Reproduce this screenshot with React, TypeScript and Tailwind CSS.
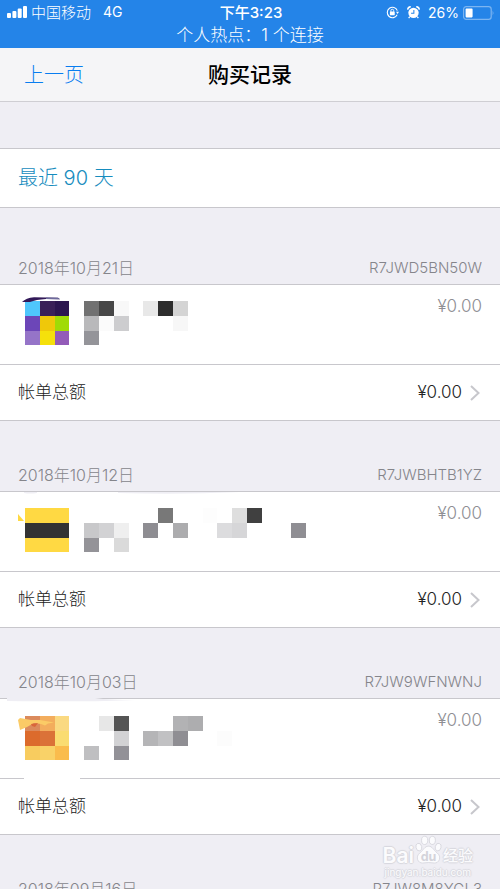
type Cell = [column: number, row: number, color: string];

type Purchase = {
  date: string;
  order: string;
  top: number;
  cells: Cell[];
  art?: "swoosh" | "corner" | "brush";
};

const purchases: Purchase[] = [
  {
    date: "2018年10月21日",
    order: "R7JWD5BN50W",
    top: 16,
    art: "swoosh",
    cells: [
      [0, 0, "#4fc6fc"], [1, 0, "#3a2058"], [2, 0, "#2c1650"],
      [0, 1, "#6c46b8"], [1, 1, "#efc80a"], [2, 1, "#a0db06"],
      [0, 2, "#9574c8"], [1, 2, "#f5e00b"], [2, 2, "#935bb8"],
      [4, 0, "#717171"], [5, 0, "#474747"], [6, 0, "#f8f8f8"],
      [8, 0, "#e8e8e8"], [9, 0, "#2d2d2d"], [10, 0, "#d4d4d4"],
      [4, 1, "#b9b9bb"], [5, 1, "#fbfbfb"], [6, 1, "#cdcdcf"],
      [10, 1, "#f7f7f7"], [4, 2, "#949499"],
    ],
  },
  {
    date: "2018年10月12日",
    order: "R7JWBHTB1YZ",
    top: 16,
    art: "corner",
    cells: [
      [0, 0, "#ffd943"], [1, 0, "#ffd943"], [2, 0, "#ffd943"],
      [0, 1, "#333333"], [1, 1, "#333333"], [2, 1, "#333333"],
      [0, 2, "#ffd943"], [1, 2, "#ffd943"], [2, 2, "#ffd943"],
      [9, 0, "#787878"], [12, 0, "#fdfdfd"], [14, 0, "#dedede"], [15, 0, "#404040"],
      [4, 1, "#c8c8ca"], [5, 1, "#d2d2d4"], [6, 1, "#efefef"],
      [8, 1, "#8e8d92"], [10, 1, "#acacae"], [13, 1, "#dcdcde"], [14, 1, "#d6d6d8"],
      [18, 1, "#8f8e93"], [4, 2, "#949398"], [6, 2, "#dadada"],
    ],
  },
  {
    date: "2018年10月03日",
    order: "R7JW9WFNWNJ",
    top: 17,
    art: "brush",
    cells: [
      [0, 0, "#db8a5c"], [1, 0, "#f3ad5d"], [2, 0, "#fad981"],
      [0, 1, "#dc6b2c"], [1, 1, "#db7238"], [2, 1, "#fadc71"],
      [0, 2, "#f8cc5f"], [1, 2, "#f9d268"], [2, 2, "#fabc4d"],
      [5, 0, "#e7e7e7"], [6, 0, "#545454"], [10, 0, "#b2b2b4"], [11, 0, "#adadaf"],
      [6, 1, "#d2d2d4"], [8, 1, "#b5b5b7"], [9, 1, "#c1c1c3"], [10, 1, "#8f8e93"],
      [13, 1, "#fcfcfc"], [4, 2, "#bfbfc1"], [6, 2, "#929197"],
    ],
  },
  { date: "2018年09月16日", order: "R7JW8M8YGL3", top: 16, cells: [] },
];

const PITCH = 14.8;

function Mosaic({ cells, top, art }: Pick<Purchase, "cells" | "top" | "art">) {
  return (
    <svg className="h-[79px] w-[320px] shrink-0 overflow-visible" viewBox="0 0 320 79" aria-hidden="true">
      <g shapeRendering="crispEdges">
        {cells.map(([column, row, color]) => (
          <rect
            key={`${column}-${row}`}
            x={25 + column * PITCH}
            y={top + row * PITCH}
            width={PITCH}
            height={PITCH}
            fill={color}
          />
        ))}
      </g>
      {art === "swoosh" && (
        <>
          <path d="M22 17 Q26 13 34 12.3 L58 12.8 L60 14.3 L46 14 Q36 14.5 30 17Z" fill="#321958" />
          <path d="M46 12.6 L58 12.8 L60 14.3 L46 14Z" fill="#6d6a9c" />
        </>
      )}
      {art === "corner" && (
        <>
          <path d="M18 22 L24 29 L18 29Z" fill="#ffd943" />
          <path d="M24 0 H37 V1 Q30 2 24 1Z M118 0 H240 Q180 3 118 1Z" fill="#efeef4" />
        </>
      )}
      {art === "brush" && (
        <>
          <path d="M7 -2 H95 V-1 Q110 1 135 1 Q100 3 7 2Z" fill="#efeef4" />
          <path d="M24 78 H80 V81 H24Z" fill="#ffffff" />
          <path d="M18 21 L20 19 L31 21 L40 21 L54 23.5 L48 24.5 L45 26.5 L41 25 L34 24 L27 28 L20 31Z" fill="#fbcb66" />
          <path d="M31 25 L38 24 L35 28 L32 27Z" fill="#d9663a" />
        </>
      )}
    </svg>
  );
}

function StatusBar() {
  return (
    <div className="h-12 shrink-0 bg-[#2484e8] text-white">
      <div className="grid h-[25px] grid-cols-[1fr_auto_1fr] items-center pl-[7px] pr-[5px] text-sm">
        <div className="flex items-center gap-1">
          <svg className="h-3 w-5" viewBox="0 0 20 12" fill="currentColor" aria-hidden="true">
            <rect x="0" y="7" width="4" height="5" rx="1" />
            <rect x="5.4" y="5" width="4" height="7" rx="1" />
            <rect x="10.7" y="2.5" width="4" height="9.5" rx="1" />
            <rect x="16" y="0" width="4" height="12" rx="1" />
          </svg>
          <span className="text-[15px] font-light">中国移动</span>
          <span className="ml-2">4G</span>
        </div>
        <span className="text-[15px] font-medium">下午3:23</span>
        <div className="flex items-center justify-end gap-2">
          <svg className="h-[13px] w-[13px]" viewBox="0 0 14 14" fill="none" stroke="currentColor" aria-hidden="true">
            <path d="M12.2 5 A5.6 5.6 0 1 0 12 9.5" strokeWidth="1.2" />
            <path d="M10.8 6.3 H14 L12.4 8.6Z" fill="currentColor" stroke="none" />
            <rect x="4.2" y="6" width="5.2" height="4" rx="0.5" fill="currentColor" stroke="none" />
            <path d="M5.3 6.3 V5 a1.5 1.5 0 0 1 3 0 V6.3" />
          </svg>
          <svg className="h-[13px] w-[13px]" viewBox="0 0 14 14" aria-hidden="true">
            <circle cx="7" cy="7.4" r="5.6" fill="#fff" />
            <path d="M1 4 A2.6 2.6 0 0 1 4 1 M10 1 A2.6 2.6 0 0 1 13 4" stroke="#fff" strokeWidth="1.8" fill="none" />
            <path d="M3 11.5 L1.8 13 M11 11.5 L12.2 13" stroke="#fff" strokeWidth="1.4" />
            <path d="M7.4 4.2 V7.8 H4.4" stroke="#2484e8" strokeWidth="1.1" fill="none" />
          </svg>
          <div className="flex items-center gap-1">
            <span>26%</span>
            <svg className="h-[14px] w-[32px]" viewBox="0 0 32 14" aria-hidden="true">
              <rect x="0.6" y="0.6" width="27.6" height="12.8" rx="2.6" fill="none" stroke="#7cb5f1" strokeWidth="1.2" />
              <rect x="2.6" y="2.6" width="7" height="8.8" rx="0.8" fill="#fff" />
              <path d="M29.6 4.6 Q31.4 7 29.6 9.4Z" fill="#7cb5f1" />
            </svg>
          </div>
        </div>
      </div>
      <p className="text-center text-[17px] leading-5 font-light">个人热点：1 个连接</p>
    </div>
  );
}

const outline =
  "text-[#fbfbfd] [text-shadow:1px_0_1px_#d8d8de,-1px_0_1px_#d8d8de,0_1px_1px_#d8d8de,0_-1px_1px_#d8d8de]";

function Watermark() {
  return (
    <div className="pointer-events-none absolute right-[27px] bottom-[11px] flex flex-col items-center">
      <div className="flex items-center gap-px">
        <span className={`${outline} pt-3 text-[21px] leading-5 font-semibold`}>Bai</span>
        <svg className="h-[30px] w-[27px]" viewBox="0 0 28 30" aria-hidden="true">
          <g fill="#fbfbfd" stroke="#d3d3da" strokeWidth="0.8">
            <ellipse cx="4" cy="12" rx="3" ry="4" transform="rotate(-15 4 12)" />
            <ellipse cx="10" cy="5" rx="3.2" ry="4.3" />
            <ellipse cx="18" cy="5" rx="3.2" ry="4.3" transform="rotate(8 18 5)" />
            <ellipse cx="24" cy="12" rx="3" ry="4" transform="rotate(15 24 12)" />
            <path d="M14 11 C18 11 19 15 23 18 C28 22 25 29 20 28.5 Q14 27.5 8 28.5 C3 29 0 22 5 18 C9 15 10 11 14 11Z" />
          </g>
          <text x="14" y="26" textAnchor="middle" fontSize="13" fontWeight="700" fill="#d3d3da">du</text>
        </svg>
        <span className={`${outline} pt-3 text-[15px] leading-5 font-medium`}>经验</span>
      </div>
      <span className={`${outline} text-[10px] leading-3`}>jingyan.baidu.com</span>
    </div>
  );
}

function PurchaseSection({ purchase }: { purchase: Purchase }) {
  return (
    <section>
      <header className="flex items-end justify-between px-[18px] pb-1 leading-6 font-light text-[#85858b]">
        <h2 className="text-base">{purchase.date}</h2>
        <span className="text-[15px]">{purchase.order}</span>
      </header>
      <div className="border-y border-[#c8c7cc] bg-white">
        <div className="flex items-start justify-between pr-[18px]">
          <Mosaic cells={purchase.cells} top={purchase.top} art={purchase.art} />
          <span className="pt-[9px] text-[17px] leading-6 font-light text-[#8e8e93]">¥0.00</span>
        </div>
        <button
          type="button"
          className="flex h-14 w-full items-center justify-between border-t border-[#c8c7cc] pr-[20px] pl-[18px] text-[17px] font-light text-[#222222]"
        >
          <span>帐单总额</span>
          <span className="flex items-center gap-2">
            ¥0.00
            <svg className="h-4 w-[10px]" viewBox="0 0 10 16" fill="none" stroke="#c7c7cc" strokeWidth="2" aria-hidden="true">
              <path d="M1 1 L8.5 8 L1 15" />
            </svg>
          </span>
        </button>
      </div>
    </section>
  );
}

export default function App() {
  return (
    <div className="relative flex h-screen flex-col overflow-hidden bg-[#efeef4] font-['Inter','Noto_Sans_CJK_SC',sans-serif]">
      <StatusBar />
      <nav className="grid h-[54px] shrink-0 grid-cols-[1fr_auto_1fr] items-center border-b border-[#cfced3] bg-[#f5f5f7] px-6">
        <button type="button" className="justify-self-start text-xl font-light text-[#087df0]">
          上一页
        </button>
        <h1 className="text-[21px] font-medium text-black">购买记录</h1>
      </nav>
      <main className="min-h-0 flex-1 overflow-y-auto pt-[46px] [scrollbar-width:none]">
        <button
          type="button"
          className="block h-[60px] w-full border-y border-[#c8c7cc] bg-white px-[18px] text-left text-xl font-light text-[#168cbe]"
        >
          最近 90 天
        </button>
        <div className="flex flex-col gap-[42px] pt-[48px]">
          {purchases.map((purchase) => (
            <PurchaseSection key={purchase.order} purchase={purchase} />
          ))}
        </div>
      </main>
      <Watermark />
    </div>
  );
}
